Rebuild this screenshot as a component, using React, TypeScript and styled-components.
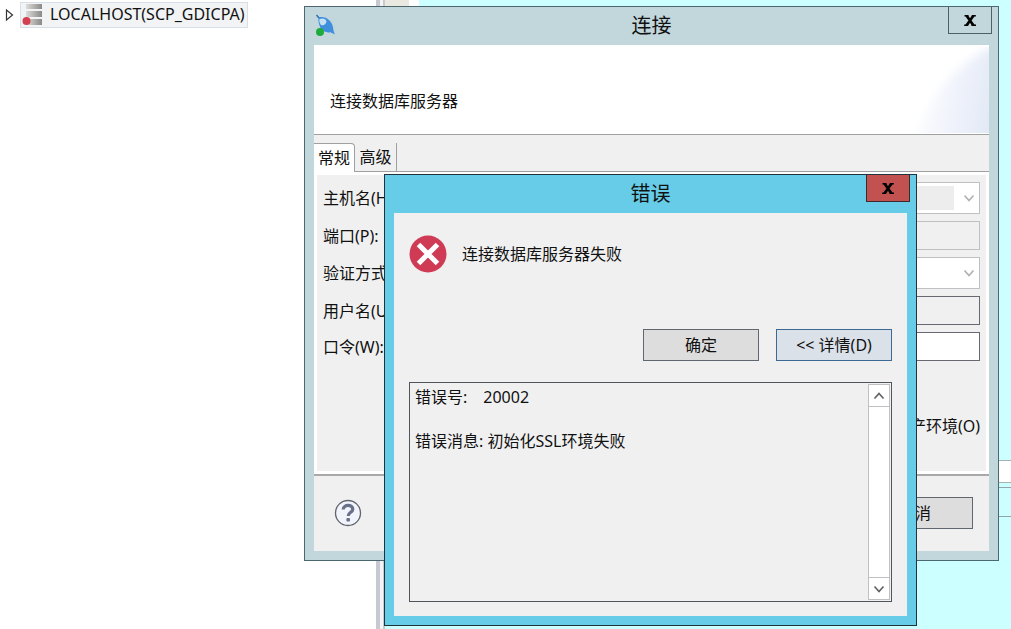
import React from 'react';
import styled, { createGlobalStyle, css } from 'styled-components';

const GlobalStyle = createGlobalStyle`
  *, *::before, *::after { box-sizing: border-box; }
  body {
    margin: 0;
    background: #ffffff;
    color: #111111;
    font: 16px/22px "Noto Sans", "Noto Sans CJK SC", sans-serif;
  }
  button, input, select, textarea { font: inherit; color: inherit; margin: 0; }
`;

const Desktop = styled.div`
  position: relative;
  display: flex;
  min-height: 100vh;
  overflow: hidden;
`;

const Navigator = styled.aside`
  flex: 0 0 376px;
  padding: 2px 5px;
`;

const TreeItem = styled.div`
  display: flex;
  align-items: center;
  gap: 6px;
`;

const TreeLabel = styled.button`
  display: flex;
  align-items: center;
  gap: 7px;
  height: 26px;
  padding: 0 2px 2px 1px;
  border: 1px solid #d9dfe6;
  background: #f1f3f5;
  white-space: nowrap;
`;

const Sash = styled.div`
  flex: 0 0 9px;
  border-left: 4px solid #c6c8d2;
  border-right: 2px solid #c9c9cf;
  background: #f4f4f4;
`;

const Workbench = styled.main`
  flex: 1;
  display: flex;
  flex-direction: column;
  background: #ccffff;
`;

const Ruler = styled.div`
  flex: 1;
  border-left: 24px solid #e9e9e2;
  box-shadow: inset 10px 0 #ffffff;
`;

const PaneTabs = styled.div`
  height: 23px;
  margin-bottom: 4px;
  border-block: 1px solid #a5b0b0;
  background: #ffffff;
`;

const PaneBar = styled.div`
  height: 30px;
  border-block: 1px solid #8fa5a8;
`;

const PaneBody = styled.div`
  height: 112px;
`;

const Window = styled.section<{ $active?: boolean }>`
  position: absolute;
  top: ${p => (p.$active ? 174 : 6)}px;
  left: ${p => (p.$active ? 384 : 304)}px;
  right: ${p => (p.$active ? 94 : 12)}px;
  border: 1px solid ${p => (p.$active ? '#20333a' : '#4c686e')};
  background: ${p => (p.$active ? '#66cce8' : '#c2d7dc')};
`;

const TitleBar = styled.header`
  display: grid;
  grid-template-columns: 1fr auto 1fr;
  height: 38px;
  padding: 0 6px;
`;

const TitleIcon = styled.span`
  align-self: center;
  height: 24px;
  padding-left: 4px;
`;

const Title = styled.h1`
  grid-column: 2;
  align-self: center;
  margin: 0;
  font-size: 20px;
  line-height: 28px;
  font-weight: 400;
`;

const CloseButton = styled.button<{ $danger?: boolean }>`
  display: flex;
  align-items: center;
  justify-content: center;
  justify-self: end;
  width: 44px;
  height: 27px;
  padding: 0;
  border: 1px solid ${p => (p.$danger ? '#3c2a2c' : '#4c6066')};
  border-top: 0;
  background: ${p => (p.$danger ? '#c2524f' : 'transparent')};
`;

const WindowBody = styled.div`
  margin: 0 9px 9px;
  background: #f0f0f0;
`;

const Banner = styled.div`
  display: flex;
  align-items: center;
  justify-content: space-between;
  height: 90px;
  padding-left: 16px;
  overflow: hidden;
  border-bottom: 1px solid #a0a0a0;
  background: #ffffff;
`;

const BannerText = styled.p`
  margin: 22px 0 0;
`;

const TabList = styled.div`
  display: flex;
  height: 37px;
  padding-top: 8px;
  border-bottom: 1px solid #a0a0a0;
`;

const Tab = styled.button<{ $selected?: boolean }>`
  width: ${p => (p.$selected ? 41 : 42)}px;
  padding: 0;
  border: 0;
  border-right: 1px solid #a0a0a0;
  background: transparent;
  ${p =>
    p.$selected &&
    css`
      height: 29px;
      border-top: 1px solid #a0a0a0;
      border-top-right-radius: 4px;
      background: #ffffff;
    `}
`;

const TabPanel = styled.div`
  height: 302px;
  padding: 7px 6px 0 6px;
  border: 3px solid #ffffff;
`;

const Form = styled.form`
  display: grid;
  grid-template-columns: 128px 1fr;
  align-items: center;
  row-gap: 7px;
  white-space: nowrap;
`;

const control = css<{ $muted?: boolean }>`
  width: 100%;
  border: 1px solid ${p => (p.$muted ? '#c0c0c4' : '#686870')};
  border-radius: 0;
  outline: 0;
  padding: 0 8px;
`;

const TextInput = styled.input<{ $muted?: boolean }>`
  ${control}
  height: 29px;
  background: ${p => (p.readOnly ? '#f0f0f0' : '#ffffff')};
`;

const SelectBox = styled.div`
  display: grid;
  align-items: center;

  > * { grid-area: 1 / 1; }
  > svg { justify-self: end; margin-right: 5px; pointer-events: none; }
`;

const Select = styled.select<{ $muted?: boolean; $filled?: boolean }>`
  ${control}
  height: 32px;
  appearance: none;
  padding: 3px 24px 3px 3px;
  background: ${p => (p.$filled ? '#ededed' : '#ffffff')};
  box-shadow: inset 0 0 0 3px #ffffff, inset -25px 0 #ffffff;
`;

const Option = styled.label`
  display: flex;
  align-items: center;
  justify-content: flex-end;
  gap: 6px;
  margin-top: 54px;
  white-space: nowrap;

  input { margin: 0; }
`;

const Footer = styled.footer`
  display: flex;
  align-items: center;
  justify-content: space-between;
  height: 77px;
  padding: 0 16px 2px 20px;
  border-top: 2px solid #a9a9a9;
`;

const HelpButton = styled.button`
  display: flex;
  padding: 0;
  border: 0;
  background: transparent;
`;

const PushButton = styled.button<{ $default?: boolean }>`
  width: 116px;
  height: 32px;
  padding: 0;
  border: 1px solid ${p => (p.$default ? '#3d6a92' : '#5f6870')};
  background: ${p => (p.$default ? '#dbe1e8' : '#dddddd')};
`;

const ErrorBody = styled(WindowBody)`
  display: flex;
  flex-direction: column;
  padding: 22px 15px 14px;
`;

const Message = styled.div`
  display: flex;
  align-items: center;
  gap: 15px;
  height: 37px;

  p { margin: 0; }
`;

const Actions = styled.div`
  display: flex;
  justify-content: flex-end;
  gap: 17px;
  margin: 57px 0 21px;
`;

const Details = styled.div`
  display: flex;
  height: 220px;
  padding: 1px;
  border: 1px solid #50545c;
`;

const DetailsText = styled.textarea`
  flex: 1;
  min-width: 0;
  padding: 2px 4px;
  border: 0;
  outline: 0;
  resize: none;
  overflow: hidden;
  background: transparent;
`;

const ScrollTrack = styled.div`
  display: flex;
  flex-direction: column;
  justify-content: space-between;
  width: 22px;
  border: 1px solid #c0c0c0;
  background: #ffffff;
`;

const ScrollButton = styled.button<{ $end?: boolean }>`
  display: flex;
  align-items: center;
  justify-content: center;
  height: 22px;
  padding: 0;
  border: 0 solid #c0c0c0;
  border-width: ${p => (p.$end ? '1px 0 0' : '0 0 1px')};
  background: #ffffff;
`;

const Chevron = ({ up, color = '#606060' }: { up?: boolean; color?: string }) => (
  <svg width="12" height="10" viewBox="0 0 12 10" fill="none" stroke={color} strokeWidth="1.6">
    <path d={up ? 'M1.5 7.5 6 2.5l4.5 5' : 'M1.5 2.5 6 7.5l4.5-5'} />
  </svg>
);

const CloseIcon = () => (
  <svg width="14" height="11" viewBox="0 0 14 11" stroke="#000" fill="none">
    <path d="M3.500 .5 10.500 10.500M10.500 .5 3.500 10.500" strokeWidth="2.700" />
    <path d="M1.500 .8h4M8.800 .8h4M1.200 10.200h4M8.500 10.200h4.500" strokeWidth="1.600" />
  </svg>
);

const ServerIcon = () => (
  <svg width="21" height="22" viewBox="0 0 21 22">
    <defs>
      <linearGradient id="slab">
        <stop offset="0" stopColor="#dcdcda" />
        <stop offset="1" stopColor="#8b8988" />
      </linearGradient>
    </defs>
    <g fill="url(#slab)">
      <rect x="4" y="1" width="16" height="5" />
      <rect x="4" y="8" width="16" height="6" />
      <rect x="4" y="16" width="16" height="6" />
    </g>
    <circle cx="4.500" cy="18" r="4" fill="#d4404f" />
  </svg>
);

const ConnectIcon = () => (
  <svg width="22" height="24" viewBox="0 0 22 24">
    <path d="M3.500 3.500C10 1.500 18 6 18.500 16.500l1.300 4-4.300-2.300c-4 .8-8-1-10-4.200C4 10.500 3 7 3.500 3.500z" fill="#3f8fdc" />
    <path d="M4.500 5C8 3.500 11 5 11.500 7.500c-.5 3-2.800 4.200-5.500 3.500C4.500 9 4 7 4.500 5z" fill="#c5e2f5" />
    <path d="M1.500 1l2.500 3" stroke="#2f6fb5" strokeWidth="1.500" />
    <circle cx="5" cy="18" r="4" fill="#1faa3c" />
  </svg>
);

const BannerArt = () => (
  <svg width="86" height="86" viewBox="0 0 86 86">
    <defs>
      <linearGradient id="sky" x1="0" y1="0.400" x2="1" y2="0.600">
        <stop offset="0" stopColor="#ffffff" />
        <stop offset="0.450" stopColor="#f0f3fb" />
        <stop offset="1" stopColor="#dce5f4" />
      </linearGradient>
      <filter id="soft" x="-20%" y="-20%" width="140%" height="140%">
        <feGaussianBlur stdDeviation="5" />
      </filter>
    </defs>
    <path d="M106-8C56 12 26 45 8 106h98z" fill="url(#sky)" filter="url(#soft)" />
  </svg>
);

const HelpIcon = () => (
  <svg width="28" height="28" viewBox="0 0 28 28" fill="none">
    <circle cx="14" cy="14" r="12.500" fill="#f1f4fa" stroke="#60646e" strokeWidth="1.300" />
    <path d="M9.200 10.500c.2-5.500 9.600-5.300 9.600-.3 0 3.200-4.600 3-4.600 6.800" stroke="#68708a" strokeWidth="3.200" />
    <rect x="12.400" y="19" width="3.600" height="3.500" rx="1" fill="#68708a" />
  </svg>
);

const ErrorIcon = () => (
  <svg width="38" height="38" viewBox="0 0 38 38">
    <circle cx="19" cy="19" r="18.500" fill="#cf3b54" />
    <path d="M9.500 9.500l19 19M28.500 9.500l-19 19" stroke="#fff" strokeWidth="5" />
  </svg>
);

export default function App() {
  return (
    <>
      <GlobalStyle />
      <Desktop>
        <Navigator>
          <TreeItem>
            <svg width="9" height="14" viewBox="0 0 9 14">
              <path d="M1.500 2v10L7.500 7z" fill="#fff" stroke="#333" strokeWidth="1.200" />
            </svg>
            <TreeLabel>
              <ServerIcon />
              LOCALHOST(SCP_GDICPA)
            </TreeLabel>
          </TreeItem>
        </Navigator>
        <Sash />
        <Workbench>
          <Ruler />
          <PaneTabs />
          <PaneBar />
          <PaneBody />
        </Workbench>

        <Window aria-label="连接">
          <TitleBar>
            <TitleIcon><ConnectIcon /></TitleIcon>
            <Title>连接</Title>
            <CloseButton aria-label="关闭"><CloseIcon /></CloseButton>
          </TitleBar>
          <WindowBody>
            <Banner>
              <BannerText>连接数据库服务器</BannerText>
              <BannerArt />
            </Banner>
            <TabList role="tablist">
              <Tab role="tab" aria-selected $selected>常规</Tab>
              <Tab role="tab">高级</Tab>
            </TabList>
            <TabPanel role="tabpanel">
              <Form>
                <label htmlFor="host">主机名(H):</label>
                <SelectBox>
                  <Select id="host" $muted $filled />
                  <Chevron color="#b0b0b0" />
                </SelectBox>
                <label htmlFor="port">端口(P):</label>
                <TextInput id="port" $muted readOnly />
                <label htmlFor="auth">验证方式(A):</label>
                <SelectBox>
                  <Select id="auth" $muted />
                  <Chevron color="#b0b0b0" />
                </SelectBox>
                <label htmlFor="user">用户名(U):</label>
                <TextInput id="user" readOnly />
                <label htmlFor="password">口令(W):</label>
                <TextInput id="password" type="password" />
              </Form>
              <Option>
                <input type="checkbox" />
                生产环境(O)
              </Option>
            </TabPanel>
            <Footer>
              <HelpButton aria-label="帮助"><HelpIcon /></HelpButton>
              <PushButton>取消</PushButton>
            </Footer>
          </WindowBody>
        </Window>

        <Window $active role="alertdialog" aria-label="错误">
          <TitleBar>
            <Title>错误</Title>
            <CloseButton $danger aria-label="关闭"><CloseIcon /></CloseButton>
          </TitleBar>
          <ErrorBody>
            <Message>
              <ErrorIcon />
              <p>连接数据库服务器失败</p>
            </Message>
            <Actions>
              <PushButton>确定</PushButton>
              <PushButton $default>&lt;&lt; 详情(D)</PushButton>
            </Actions>
            <Details>
              <DetailsText
                readOnly
                aria-label="错误详情"
                defaultValue={'错误号:\u300020002\n\n错误消息: 初始化SSL环境失败'}
              />
              <ScrollTrack>
                <ScrollButton aria-label="向上滚动"><Chevron up /></ScrollButton>
                <ScrollButton $end aria-label="向下滚动"><Chevron /></ScrollButton>
              </ScrollTrack>
            </Details>
          </ErrorBody>
        </Window>
      </Desktop>
    </>
  );
}
